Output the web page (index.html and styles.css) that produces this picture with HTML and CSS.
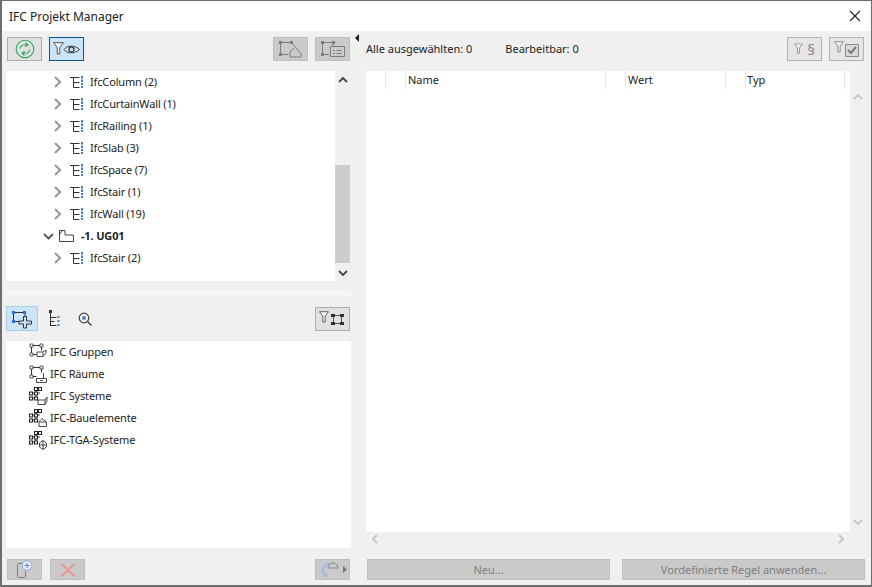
FILE: index.html
```html
<html>
<head>
<title>IFC Projekt Manager</title>
<meta charset="utf-8">
<link rel="stylesheet" href="styles.css">
</head>
<body>
<svg class="defs" width="0" height="0">
  <symbol id="chev" viewBox="0 0 9 12"><path d="M2 1l5 5-5 5" fill="none" stroke="#9a9a9a" stroke-width="2.200"/></symbol>
  <symbol id="type" viewBox="0 0 13 13">
    <path d="M0 1.500h9.500M3.500 1.500v10h6M3.500 6.500h6" fill="none" stroke="#333" stroke-width="1"/>
    <path d="M11 0h2v2.500h-2zM11 3.500h2v2.500h-2zM11 7h2v2h-2zM11 10h2v2h-2z" fill="#3f7fd0"/>
  </symbol>
  <symbol id="rooms" viewBox="0 0 20 20">
    <path d="M3.500 3.500h10M3.500 3.500v9M13.500 3.500v5M3.500 12.500h5" fill="none" stroke="#333"/>
    <path d="M2 2h3v3H2zM12 2h3v3h-3zM2 11h3v3H2z" fill="#fff" stroke="#333" stroke-width=".8"/>
  </symbol>
  <symbol id="nodes" viewBox="0 0 20 20">
    <path d="M4 7h8M8 3v10M4 12h6" fill="none" stroke="#444"/>
    <path d="M6.500 1.500h3v3h-3zM10.500 1.500h3v3h-3zM1.500 6h3v3h-3zM6.500 6h3v3h-3zM1.500 11h3v3h-3zM6.500 11h3v3h-3z" fill="#fff" stroke="#222" stroke-width="1.100"/>
  </symbol>
  <symbol id="funnel" viewBox="0 0 11 13"><path d="M.5 .7h10L6.800 5.500v6.500h-2.600V5.500z" fill="#f4f4f4" stroke="#555"/></symbol>
</svg>

<div class="window">
  <div class="titlebar">
    <span>IFC Projekt Manager</span>
    <svg class="close" width="12" height="12" viewBox="0 0 12 12"><path d="M1 1l10 10M11 1L1 11" stroke="#222" stroke-width="1.100"/></svg>
  </div>

  <div class="main">
    <div class="left">
      <div class="toolbar">
        <div class="btn">
          <svg width="20" height="20" viewBox="0 0 20 20" fill="none" stroke="#33a860" stroke-width="1.100"><circle cx="10" cy="10" r="8.800"/><path d="M5 9.500c.5-3 3.500-4.500 7-3.500M10.500 3.500L13 6l-3 1.500M15 10.500c-.5 3-3.500 4.500-7 3.500M9.500 16.500L7 14l3-1.500"/></svg>
        </div>
        <div class="btn on">
          <svg width="28" height="14" viewBox="0 0 28 14">
            <use href="#funnel" width="11" height="13"/>
            <path d="M11 7.500c3-4.500 11-4.500 15.500 0-4.500 4.500-12.500 4.500-15.500 0z" fill="none" stroke="#444"/>
            <circle cx="18.500" cy="7.500" r="2.500" fill="none" stroke="#444" stroke-width="1.300"/>
          </svg>
        </div>
        <div class="spacer"></div>
        <div class="btn off">
          <svg width="26" height="18" viewBox="0 0 26 18" fill="none" stroke="#7d7d7d">
            <path d="M3 2.500h10.500M2.500 3v11M3 14.500h7M14 3l9 10.500v3.500H12v-5l4-4"/>
            <path d="M1 1h3v3H1zM12 1h3v3h-3zM1 13h3v3H1z" fill="#7d7d7d" stroke="none"/>
          </svg>
        </div>
        <div class="btn off">
          <svg width="26" height="18" viewBox="0 0 26 18" fill="none" stroke="#7d7d7d">
            <path d="M3 2.500h10.500M2.500 3v11M3 14.500h6M13 3v4"/>
            <path d="M10.500 6.500h14v10h-14zM13 10.500h2M13 13.500h2M16.500 10.500h5M16.500 13.500h5"/>
            <path d="M1 1h3v3H1zM12 1h3v3h-3zM1 13h3v3H1z" fill="#7d7d7d" stroke="none"/>
          </svg>
        </div>
      </div>

      <div class="tree">
        <div class="tree-rows">
          <div class="row"><svg class="chev"><use href="#chev"/></svg><svg class="type"><use href="#type"/></svg><span>IfcColumn (2)</span></div>
          <div class="row"><svg class="chev"><use href="#chev"/></svg><svg class="type"><use href="#type"/></svg><span>IfcCurtainWall (1)</span></div>
          <div class="row"><svg class="chev"><use href="#chev"/></svg><svg class="type"><use href="#type"/></svg><span>IfcRailing (1)</span></div>
          <div class="row"><svg class="chev"><use href="#chev"/></svg><svg class="type"><use href="#type"/></svg><span>IfcSlab (3)</span></div>
          <div class="row"><svg class="chev"><use href="#chev"/></svg><svg class="type"><use href="#type"/></svg><span>IfcSpace (7)</span></div>
          <div class="row"><svg class="chev"><use href="#chev"/></svg><svg class="type"><use href="#type"/></svg><span>IfcStair (1)</span></div>
          <div class="row"><svg class="chev"><use href="#chev"/></svg><svg class="type"><use href="#type"/></svg><span>IfcWall (19)</span></div>
          <div class="row story">
            <svg width="11" height="7" viewBox="0 0 11 7"><path d="M1 1l4.500 4.500L10 1" fill="none" stroke="#555" stroke-width="1.800"/></svg>
            <svg width="15" height="12" viewBox="0 0 15 12"><path d="M.5 11.500V.5h5.500v4.500h8.500v6.500zM.5 4.500l3-4" fill="none" stroke="#444"/></svg>
            <span>-1. UG01</span>
          </div>
          <div class="row"><svg class="chev"><use href="#chev"/></svg><svg class="type"><use href="#type"/></svg><span>IfcStair (2)</span></div>
        </div>
        <div class="vscroll">
          <svg width="10" height="7" viewBox="0 0 10 7"><path d="M1 6l4-4 4 4" fill="none" stroke="#444" stroke-width="1.800"/></svg>
          <div class="thumb"></div>
          <svg width="10" height="7" viewBox="0 0 10 7"><path d="M1 1l4 4 4-4" fill="none" stroke="#444" stroke-width="1.800"/></svg>
        </div>
      </div>

      <div class="split"><div class="band"></div></div>

      <div class="tabs">
        <div class="tab on">
          <svg width="24" height="20" viewBox="0 0 24 20" fill="none" stroke="#333">
            <path d="M4 3.500h11M3.500 3v11M3.500 12.500h6M15 3v5"/>
            <path d="M13.500 7.500h3v4.500h5v3h-5v4h-3v-4h-4.500v-3h4.500z" fill="#cce4f7"/>
            <path d="M2 2h3v3H2zM13 2h3v3h-3zM2 11h3v3H2z" fill="#2f6fd0" stroke="none"/>
          </svg>
        </div>
        <div class="tab">
          <svg width="14" height="18" viewBox="0 0 14 18" fill="none" stroke="#333">
            <path d="M3.500 2v14M3.500 7.500h6M3.500 15.500h6M3.500 11.500h4"/>
            <path d="M2 0h3v3H2z" fill="#333" stroke="none"/>
            <path d="M10.500 6h2v2h-2zM10.500 10h2v2h-2zM10.500 14h2v2h-2z" fill="#4a86d0" stroke="none"/>
          </svg>
        </div>
        <div class="tab">
          <svg width="14" height="14" viewBox="0 0 14 14" fill="none"><circle cx="6" cy="6" r="4.800" stroke="#444" stroke-width="1.200"/><circle cx="6" cy="6" r="2" fill="#4a86d0"/><path d="M9.500 9.500l4 4" stroke="#444" stroke-width="1.500"/></svg>
        </div>
        <div class="spacer"></div>
        <div class="btn">
          <svg width="27" height="15" viewBox="0 0 27 15" fill="none" stroke="#333">
            <use href="#funnel" width="10" height="12"/>
            <path d="M13 4.500h10M13 12.500h10M14.500 5v7M22.500 5v7" stroke="#555"/>
            <path d="M12 3h4v3h-4zM21 3h4v3h-4zM12 11h4v3h-4zM21 11h4v3h-4z" fill="#333" stroke="none"/>
          </svg>
        </div>
      </div>

      <div class="groups">
        <div class="row"><svg class="gicon" viewBox="0 0 20 20"><use href="#rooms"/><path d="M9 14.500h6l3-3.500v-3l-3 2H9zM15 14.500v-4" fill="#fff" stroke="#333" stroke-width=".9"/></svg><span>IFC Gruppen</span></div>
        <div class="row"><svg class="gicon" viewBox="0 0 20 20"><use href="#rooms"/><path d="M8.500 14.500h10v4h-10zM15.500 9v5.500M12 16.500h3" fill="#fff" stroke="#333" stroke-width=".9"/></svg><span>IFC Räume</span></div>
        <div class="row"><svg class="gicon" viewBox="0 0 20 20"><use href="#nodes"/><path d="M10 18.500V14h7l2-3v4l-2 3.500zM17 14v4" fill="#fff" stroke="#333" stroke-width=".9"/></svg><span>IFC Systeme</span></div>
        <div class="row"><svg class="gicon" viewBox="0 0 20 20"><use href="#nodes"/><path d="M11 18.500v-5l3-3 4.500 3.500v4.500zM11 14h7" fill="#fff" stroke="#333" stroke-width=".9"/></svg><span>IFC-Bauelemente</span></div>
        <div class="row"><svg class="gicon" viewBox="0 0 20 20"><use href="#nodes"/><path d="M11.500 13l3.500-2.500 3.500 2.500v4l-3.500 2.500-3.500-2.500zM15 10.500V19.500M11.500 15h7" fill="#fff" stroke="#333" stroke-width=".9"/></svg><span>IFC-TGA-Systeme</span></div>
      </div>

      <div class="bottom">
        <div class="btn off low">
          <svg width="22" height="19" viewBox="0 0 22 19" fill="none">
            <path d="M11 3.500H4.500q-1 0-1 1v12q0 1 1 1h6q1 0 1-1v-6" stroke="#7d7d7d"/>
            <circle cx="13" cy="5.500" r="4.800" fill="#e4ecf8" stroke="#8fabd8"/>
            <path d="M10.500 5.500h5M13 3v5" stroke="#5f86c8"/>
          </svg>
        </div>
        <div class="btn off low">
          <svg width="14" height="14" viewBox="0 0 14 14"><path d="M1 1l12 12M13 1L1 13" stroke="#e89a8a" stroke-width="2"/></svg>
        </div>
        <div class="spacer"></div>
        <div class="btn off low pick">
          <svg width="19" height="15" viewBox="0 0 19 15" fill="none"><path d="M11 2.500A6 6 0 1 0 8 14" stroke="#a9bcdc" stroke-width="3"/><path d="M8 6a5 5 0 0 1 10 0z" fill="#c8c8c8" stroke="#8a8a8a"/></svg>
          <svg width="4" height="7" viewBox="0 0 4 7"><path d="M0 0l4 3.500L0 7z" fill="#777"/></svg>
        </div>
      </div>
    </div>

    <div class="sash"><svg width="4" height="8" viewBox="0 0 4 8"><path d="M4 0L0 4l4 4z" fill="#222"/></svg></div>

    <div class="right">
      <div class="toolbar">
        <span class="count">Alle ausgewählten: 0</span>
        <span class="count">Bearbeitbar: 0</span>
        <div class="spacer"></div>
        <div class="btn off para-btn">
          <svg width="9" height="12" viewBox="0 0 10 13"><use href="#funnel" width="10" height="12" opacity=".65"/></svg>
          <span class="para">§</span>
        </div>
        <div class="btn off">
          <svg width="26" height="16" viewBox="0 0 26 16">
            <use href="#funnel" width="10" height="12" opacity=".65"/>
            <path d="M11.500 3.500h13v12h-13z" fill="#d8d8d8" stroke="#8a8a8a"/>
            <path d="M14 9l3 3 5-6" fill="none" stroke="#7d7d7d" stroke-width="2"/>
          </svg>
        </div>
      </div>

      <div class="table">
        <div class="table-body">
          <div class="head">
            <div class="cell c0"></div>
            <div class="cell c1"></div>
            <div class="cell c2">Name</div>
            <div class="cell c3"></div>
            <div class="cell c4">Wert</div>
            <div class="cell c5"></div>
            <div class="cell c6">Typ</div>
          </div>
        </div>
        <div class="vscroll dim">
          <svg width="10" height="7" viewBox="0 0 10 7"><path d="M1 6l4-4 4 4" fill="none" stroke="#c4c4c4" stroke-width="1.800"/></svg>
          <svg width="10" height="7" viewBox="0 0 10 7"><path d="M1 1l4 4 4-4" fill="none" stroke="#c4c4c4" stroke-width="1.800"/></svg>
        </div>
      </div>
      <div class="hscroll">
        <svg width="7" height="10" viewBox="0 0 7 10"><path d="M6 1L2 5l4 4" fill="none" stroke="#c4c4c4" stroke-width="1.800"/></svg>
        <svg width="7" height="10" viewBox="0 0 7 10"><path d="M1 1l4 4-4 4" fill="none" stroke="#c4c4c4" stroke-width="1.800"/></svg>
      </div>
      <div class="actions">
        <div class="btn off wide">Neu...</div>
        <div class="btn off wide">Vordefinierte Regel anwenden...</div>
      </div>
    </div>
  </div>
</div>
</body>
</html>
```

FILE: styles.css
```css
* { box-sizing : border-box }

body, html {
  margin : 0;
  height : 100%;
  overflow : hidden;
  background : #f0f0f0
}
body {
  font-family : "Noto Sans", "Open Sans", sans-serif;
  font-size : 11px;
  color : #222
}
svg { display : block; flex : none }
.defs { position : absolute }
.spacer { flex : 1 }

.window {
  width : 872px;
  height : 587px;
  display : flex;
  flex-direction : column;
  border : 1px solid #6e6e6e;
  border-width : 1px 1px 2px 2px
}
.titlebar {
  height : 30px;
  flex : none;
  background : #fff;
  display : flex;
  align-items : center;
  justify-content : space-between;
  padding : 0 10px 0 7px;
  font-size : 12px
}
.main {
  flex : 1;
  display : flex;
  padding : 0 6px 0 4px;
  min-height : 0
}
.left {
  width : 345px;
  display : flex;
  flex-direction : column
}
.sash {
  width : 15px;
  padding : 3px 0 0 4px
}
.right {
  width : 499px;
  display : flex;
  flex-direction : column
}

.toolbar {
  height : 24px;
  margin-top : 6px;
  flex : none;
  display : flex;
  align-items : center;
  gap : 7px;
  padding : 0 1px
}
.btn {
  width : 35px;
  height : 24px;
  display : flex;
  align-items : center;
  justify-content : center;
  flex : none;
  background : #e1e1e1;
  border : 1px solid #adadad
}
.btn.on {
  background : #cce4f7;
  border-color : #0f5290
}
.btn.off {
  background : #cacaca;
  border-color : #bfbfbf;
  color : #7e7e7e
}
.btn.low { height : 21px }
.btn.pick { gap : 4px; padding-left : 1px }
.right .toolbar .btn { background : #e6e6e6; border-color : #b4b4b4 }

.count { margin : 0 26px 2px 0 }
.count:first-child { margin-left : -1px }
.para-btn { gap : 4px }
.para {
  font-size : 15px;
  line-height : 18px;
  color : #8a8a8a
}

.tree {
  height : 210px;
  margin-top : 10px;
  flex : none;
  display : flex
}
.tree-rows {
  width : 329px;
  background : #fff
}
.row {
  height : 22px;
  display : flex;
  align-items : center;
  letter-spacing : -0.15px
}
.row span { margin-bottom : 2px }
.tree-rows .row { padding-left : 47px }
.chev { width : 9px; height : 12px }
.type { width : 13px; height : 13px; margin : 0 7px 0 8px }
.story { font-weight : bold }
.tree-rows .story { padding-left : 37px }
.story svg:nth-child(2) { margin : 0 7px 0 5px }

.vscroll {
  width : 16px;
  display : flex;
  flex-direction : column;
  align-items : center;
  justify-content : space-between;
  padding : 5px 0 4px;
  position : relative
}
.thumb {
  position : absolute;
  left : 0;
  top : 94px;
  width : 15px;
  height : 98px;
  background : #cdcdcd
}

.split {
  height : 25px;
  flex : none;
  padding-top : 9px
}
.band { height : 6px; background : #f5f5f5 }

.tabs {
  height : 25px;
  flex : none;
  display : flex;
  align-items : center;
  padding-right : 1px
}
.tab {
  width : 31px;
  height : 25px;
  display : flex;
  align-items : center;
  justify-content : center
}
.tab.on {
  width : 32px;
  background : #cce4f7;
  border : 1px solid #a5cdec
}

.groups {
  height : 207px;
  margin-top : 10px;
  flex : none;
  background : #fff;
  padding-left : 22px
}
.gicon { width : 20px; height : 20px; margin-right : 2px }

.bottom {
  height : 21px;
  margin-top : 11px;
  flex : none;
  display : flex;
  gap : 8px;
  padding : 0 1px
}

.table {
  height : 461px;
  margin-top : 10px;
  flex : none;
  display : flex
}
.table-body {
  width : 484px;
  background : #fff
}
.head {
  height : 18px;
  width : 479px;
  display : flex
}
.cell {
  height : 18px;
  line-height : 18px;
  border-right : 1px solid #e6e6e6;
  padding-left : 2px
}
.c0 { width : 20px }
.c1 { width : 20px }
.c2 { width : 200px }
.c3 { width : 20px }
.c4 { width : 100px }
.c5 { width : 20px }
.c6 { width : 99px; padding-left : 1px }
.table .vscroll { width : 15px; padding : 22px 0 6px }

.hscroll {
  height : 14px;
  width : 484px;
  padding : 0 5px;
  flex : none;
  display : flex;
  align-items : center;
  justify-content : space-between
}
.actions {
  margin-top : 13px;
  display : flex;
  gap : 12px;
  padding-left : 1px
}
.btn.wide {
  width : 243px;
  height : 21px;
  background : #cacaca
}
```
